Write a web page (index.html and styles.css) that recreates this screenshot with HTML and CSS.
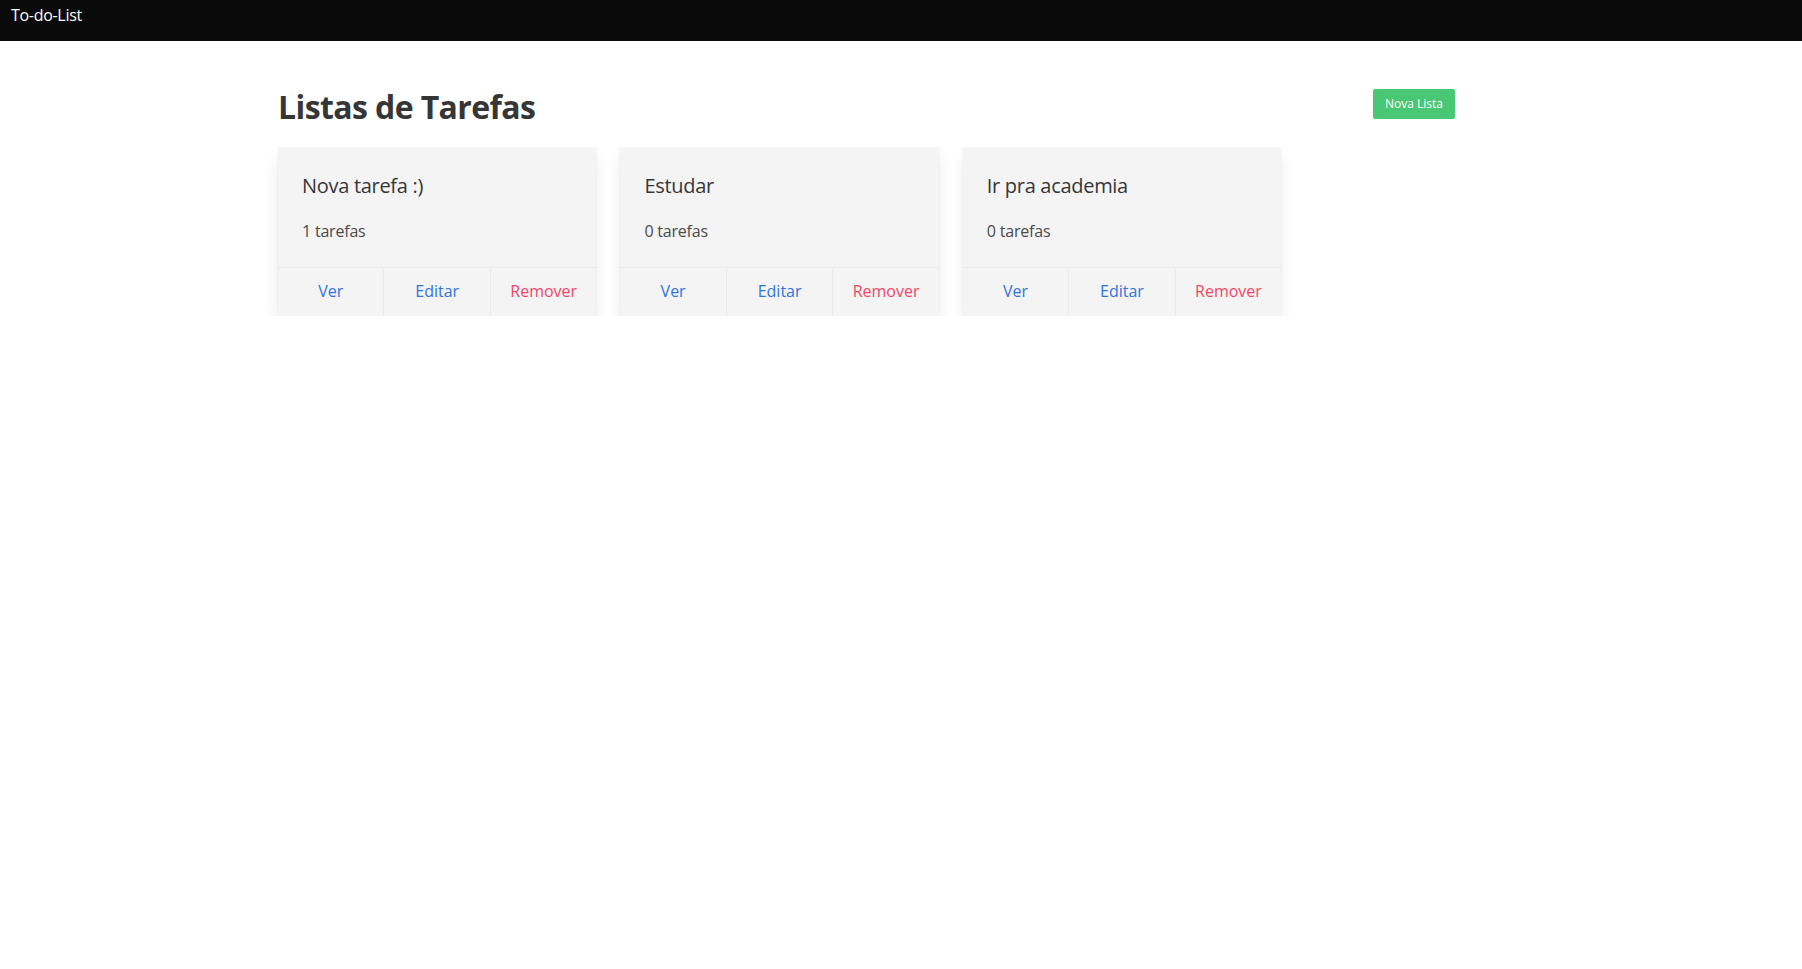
FILE: index.html
```html
<!DOCTYPE html>
<html lang="pt-BR">
<head>
<meta charset="utf-8">
<title>To-do-List</title>
<link rel="stylesheet" href="styles.css">
</head>
<body>
<nav class="navbar">
  <span class="brand">To-do-List</span>
</nav>
<main class="page">
  <div class="header-row">
    <h1 class="title">Listas de Tarefas</h1>
    <button class="btn-success" type="button">Nova Lista</button>
  </div>
  <div class="cards">
    <div class="card">
      <div class="card-content">
        <p class="card-title">Nova tarefa :)</p>
        <p class="card-sub">1 tarefas</p>
      </div>
      <div class="card-footer">
        <a class="footer-item link">Ver</a>
        <a class="footer-item link">Editar</a>
        <a class="footer-item danger">Remover</a>
      </div>
    </div>
    <div class="card">
      <div class="card-content">
        <p class="card-title">Estudar</p>
        <p class="card-sub">0 tarefas</p>
      </div>
      <div class="card-footer">
        <a class="footer-item link">Ver</a>
        <a class="footer-item link">Editar</a>
        <a class="footer-item danger">Remover</a>
      </div>
    </div>
    <div class="card">
      <div class="card-content">
        <p class="card-title">Ir pra academia</p>
        <p class="card-sub">0 tarefas</p>
      </div>
      <div class="card-footer">
        <a class="footer-item link">Ver</a>
        <a class="footer-item link">Editar</a>
        <a class="footer-item danger">Remover</a>
      </div>
    </div>
  </div>
</main>
</body>
</html>
```

FILE: styles.css
```css
* { box-sizing: border-box; }
html, body {
  margin: 0;
  padding: 0;
  background: #ffffff;
}
body {
  font-family: "Open Sans", "Noto Sans", sans-serif;
  font-size: 16px;
  line-height: 1.5;
  color: #4a4a4a;
}
.navbar {
  height: 41px;
  background: #0a0a0a;
  padding: 3px 11px 0;
}
.brand {
  color: #ffffff;
  font-size: 16px;
  line-height: 24px;
  letter-spacing: -0.3px;
}
.page {
  width: 1177px;
  margin-left: 278px;
  padding-top: 48px;
}
.header-row {
  display: flex;
  justify-content: space-between;
  align-items: flex-start;
  margin-bottom: 23px;
}
.title {
  margin: 0;
  font-size: 32px;
  font-weight: 700;
  line-height: 36px;
  color: #363636;
  letter-spacing: -0.6px;
}
.btn-success {
  height: 30px;
  padding: 0 11px;
  border: 1px solid transparent;
  border-radius: 2px;
  background: #48c774;
  color: #ffffff;
  font-family: inherit;
  font-size: 12px;
  line-height: 1;
  cursor: pointer;
}
.cards {
  display: flex;
  gap: 24px;
}
.card {
  width: 318.4px;
  background: #f4f4f4;
  box-shadow: 0 0.5em 1em -0.125em rgba(10, 10, 10, 0.1), 0 0 0 1px rgba(10, 10, 10, 0.02);
}
.card-content {
  padding: 24px;
}
.card-title {
  margin: 0 0 18px;
  font-size: 20px;
  line-height: 28.5px;
  color: #363636;
  letter-spacing: -0.3px;
}
.card-sub {
  margin: 0;
  font-size: 16px;
  line-height: 24px;
  color: #4a4a4a;
  letter-spacing: -0.2px;
}
.card-footer {
  display: flex;
  border-top: 1px solid #e9e9e9;
}
.footer-item {
  flex: 1 1 0;
  padding: 11px 12px 13px;
  text-align: center;
  text-decoration: none;
  cursor: pointer;
}
.footer-item + .footer-item {
  border-left: 1px solid #e9e9e9;
}
.link { color: #3273dc; }
.danger { color: #f14668; }
```
